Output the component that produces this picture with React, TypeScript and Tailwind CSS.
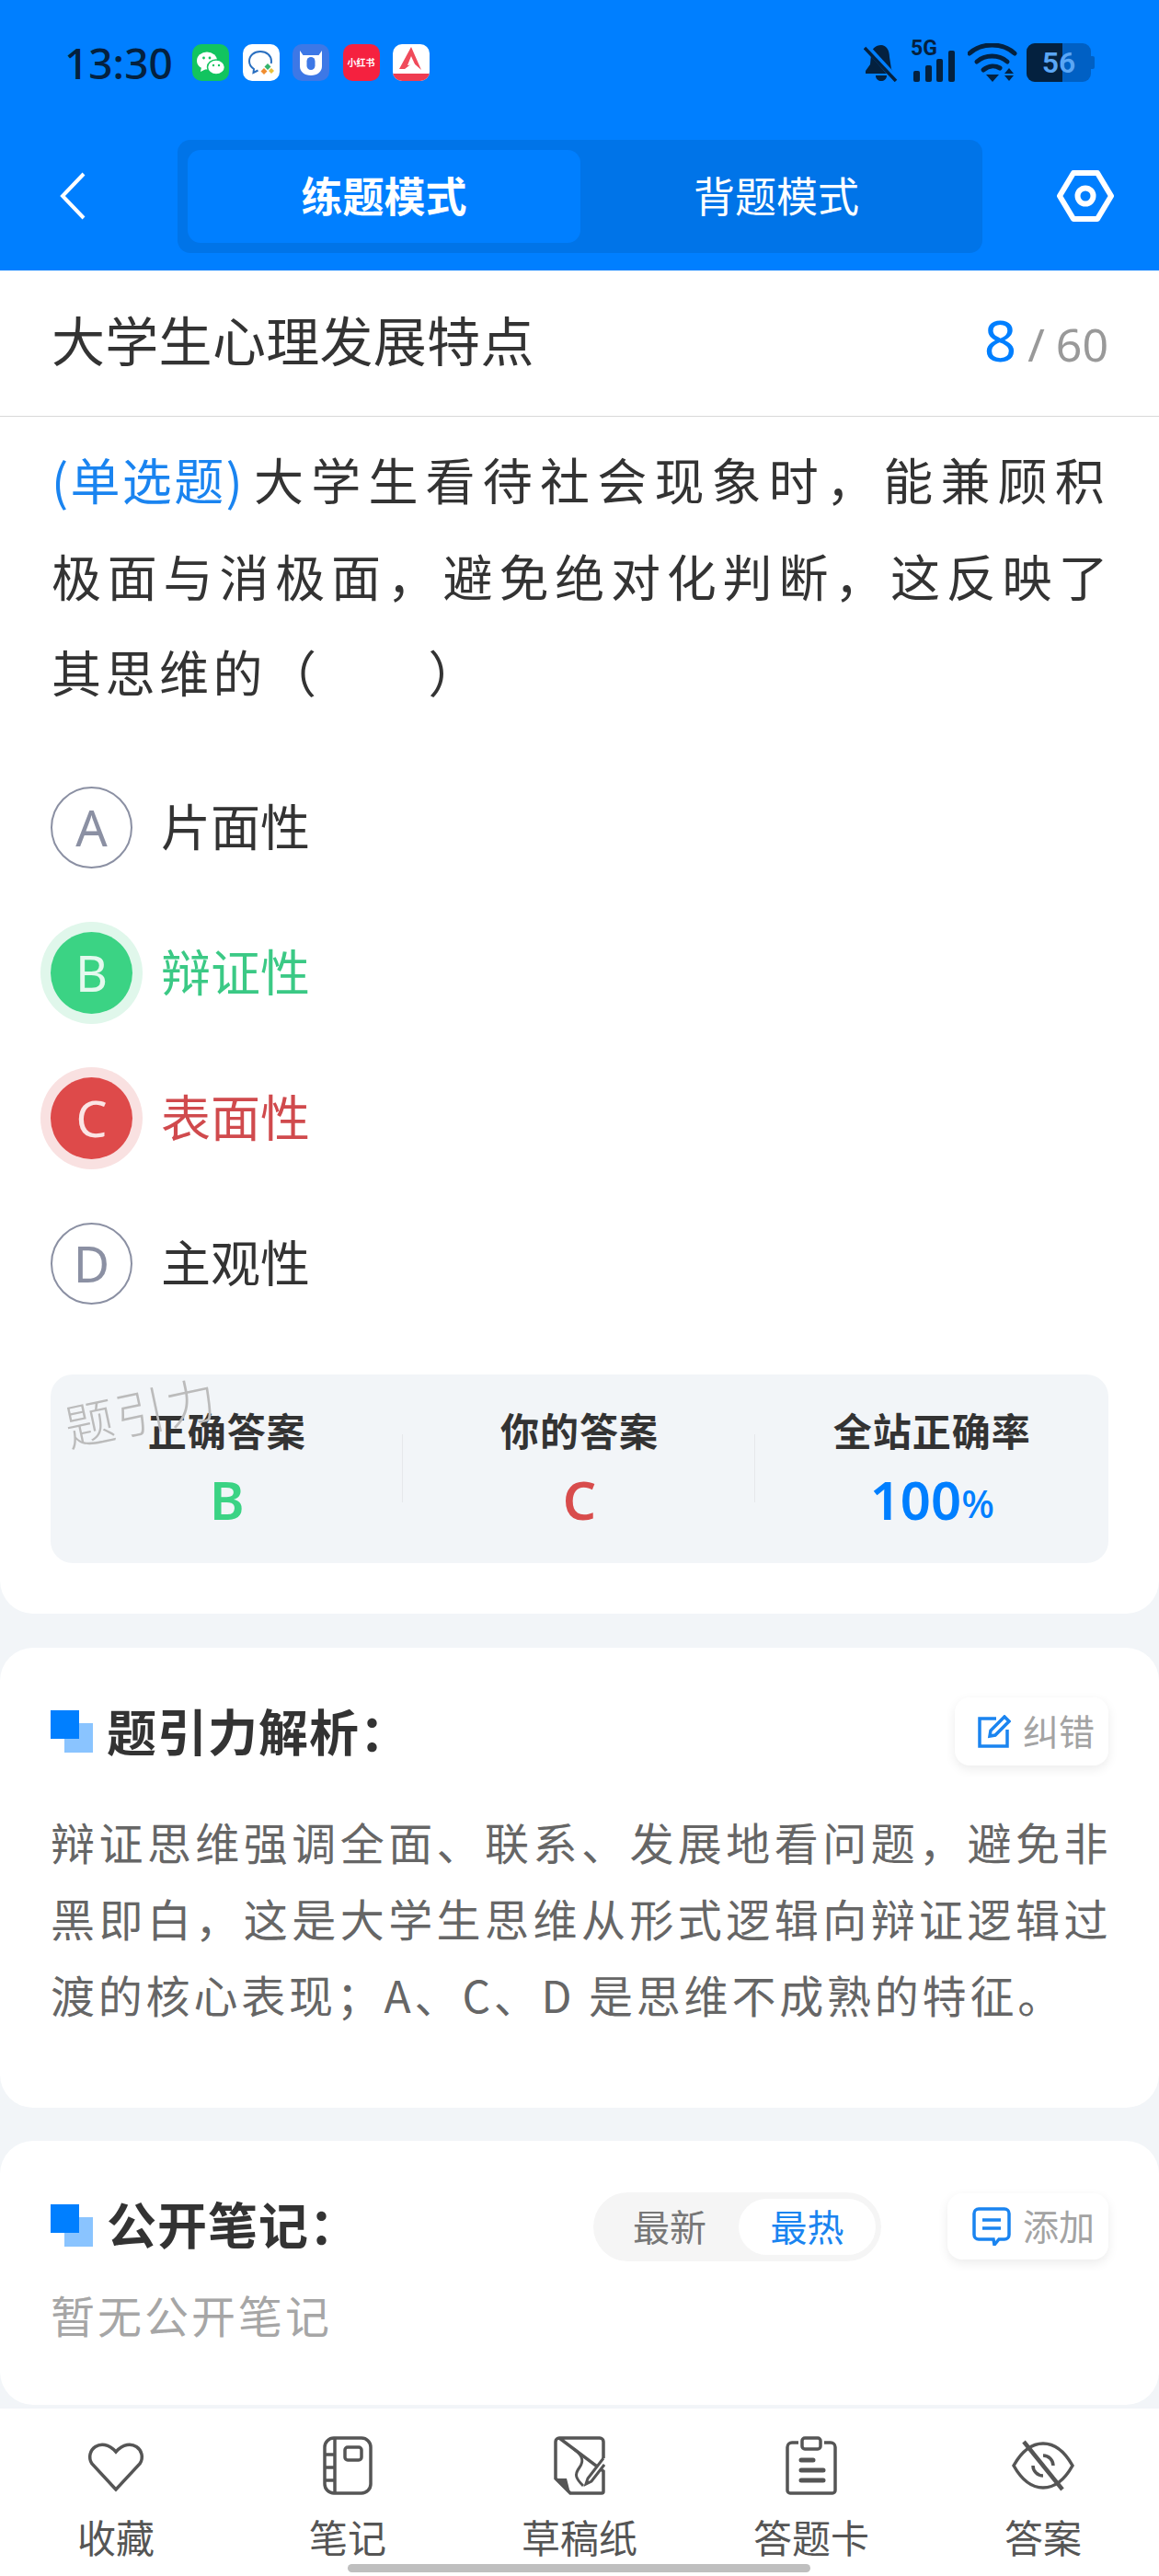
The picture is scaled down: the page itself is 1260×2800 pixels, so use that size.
import React from 'react';

const font = { fontFamily: '"Noto Sans CJK SC", sans-serif' };

const AppIcons = () => (
  <div className="flex items-center gap-[14.5px]">
    <div className="w-[40px] h-[40px] rounded-[10px] bg-[#12c45f] flex items-center justify-center">
      <svg viewBox="0 0 40 40" className="w-[40px] h-[40px]">
        <ellipse cx="16" cy="18" rx="11" ry="9.5" fill="#fff" />
        <path d="M10 25l-1 5 6-3z" fill="#fff" />
        <ellipse cx="26" cy="25" rx="9.5" ry="8" fill="#fff" stroke="#12c45f" strokeWidth="1.5" />
        <circle cx="12.5" cy="15" r="1.4" fill="#12c45f" />
        <circle cx="19" cy="15" r="1.4" fill="#12c45f" />
        <circle cx="23" cy="23" r="1.2" fill="#12c45f" />
        <circle cx="29" cy="23" r="1.2" fill="#12c45f" />
      </svg>
    </div>
    <div className="w-[40px] h-[40px] rounded-[10px] bg-white flex items-center justify-center">
      <svg viewBox="0 0 40 40" className="w-[40px] h-[40px]">
        <path d="M19 8c-7 0-12 4.500-12 10.500 0 3.500 2 6.500 5 8.500l-.5 4 5-2.500" fill="none" stroke="#2a6fc0" strokeWidth="2" />
        <path d="M19 8c7 0 12 4.500 12 10.500 0 1-.1 1.500-.3 2.500" fill="none" stroke="#2a6fc0" strokeWidth="2" />
        <path d="M27 21l3.500 3.500-3.500 3.500-3.500-3.500z" fill="#35b36b" />
        <path d="M23 26l3.500 3.500-3.500 3.500-3.500-3.500z" fill="#f08c2e" />
        <path d="M31 26l3 3-3 3-3-3z" fill="#e9c13a" />
      </svg>
    </div>
    <div className="w-[40px] h-[40px] rounded-[10px] bg-[#3d78e6] flex items-center justify-center">
      <svg viewBox="0 0 40 40" className="w-[40px] h-[40px]">
        <path d="M8 7l3.500 5h17L32 7v17c0 6-5 10-12 10S8 30 8 24z" fill="#fff" />
        <rect x="15.500" y="14" width="9" height="14" rx="4.500" fill="#3d78e6" />
      </svg>
    </div>
    <div className="w-[40px] h-[40px] rounded-[10px] bg-[#f5213f] flex items-center justify-center text-white font-bold text-[10px] leading-none whitespace-nowrap">
      小红书
    </div>
    <div className="w-[40px] h-[40px] rounded-[10px] bg-white overflow-hidden flex flex-col">
      <svg viewBox="0 0 40 32" className="w-[40px] h-[32px]">
        <path d="M20 3l11 25-9-8-9 7-6 0z" fill="#f04a5a" />
        <path d="M20 13l4 9-8 1z" fill="#fff" />
      </svg>
      <div className="h-[8px] bg-[#ef3c50]" />
    </div>
  </div>
);

const StatusIcons = () => (
  <div className="flex items-center">
    <svg viewBox="0 0 38 42" className="w-[38px] h-[42px] mr-[13px]">
      <path d="M19 2c-6 0-11 4-11 11l-1 10-5 7v3h31l-3-5-2-13c0-8-4-13-9-13z" fill="#04213f" />
      <path d="M13 35h12c0 4-3 6-6 6s-6-2-6-6z" fill="#04213f" />
      <path d="M3 4l33 36" stroke="#007fff" strokeWidth="7" />
      <path d="M1 5l34 36" stroke="#04213f" strokeWidth="3.500" />
    </svg>
    <div className="relative w-[50px] h-[42px] mr-[12px]">
      <span className="absolute left-0 top-[-8px] text-[23px] leading-[28px] font-bold text-[#04213f]" style={{ fontFamily: '"Roboto", sans-serif' }}>5G</span>
      <div className="absolute bottom-0 left-[3px] flex items-end gap-[5.5px]">
        <div className="w-[7px] h-[12px] rounded-[2px] bg-[#04213f]" />
        <div className="w-[7px] h-[18px] rounded-[2px] bg-[#04213f]" />
        <div className="w-[7px] h-[25px] rounded-[2px] bg-[#04213f]" />
        <div className="w-[7px] h-[34px] rounded-[2px] bg-[#04213f]" />
      </div>
    </div>
    <svg viewBox="0 0 54 42" className="w-[54px] h-[42px] mr-[10px]">
      <path d="M2 11C15-1 38-1 51 11" fill="none" stroke="#04213f" strokeWidth="5" strokeLinecap="round" />
      <path d="M10 20c9-8 24-8 33 0" fill="none" stroke="#04213f" strokeWidth="5" strokeLinecap="round" />
      <path d="M17 29c6-5 13-5 18-2" fill="none" stroke="#04213f" strokeWidth="5" strokeLinecap="round" />
      <path d="M20 34h14l-7 8z" fill="#04213f" />
      <path d="M45 27l5 6H40z" fill="#04213f" />
      <path d="M40 35h10l-5 6z" fill="#04213f" />
    </svg>
    <div className="relative flex items-center">
      <div className="relative w-[70px] h-[42px] rounded-[9px] bg-[#0060c4] overflow-hidden">
        <div className="absolute left-0 top-0 bottom-0 w-[39px] bg-[#04213f]" />
        <div className="absolute inset-0 flex items-center justify-center text-[32px] font-semibold text-[#5aa6f5] leading-none" style={{ fontFamily: '"Roboto", sans-serif' }}>56</div>
      </div>
      <div className="w-[4px] h-[14px] rounded-r-[2px] bg-[#0060c4]" />
    </div>
  </div>
);

const Option = ({ letter, text, state }: { letter: string; text: string; state?: 'right' | 'wrong' }) => {
  const circle =
    state === 'right'
      ? 'bg-[#3bd384] text-[#e4f9ee] shadow-[0_0_0_11px_#e0f7eb]'
      : state === 'wrong'
        ? 'bg-[#de4a4a] text-[#fbe5e5] shadow-[0_0_0_11px_#f9e1e1]'
        : 'border-[2px] border-[#8b90a3] text-[#8b90a3]';
  const label = state === 'right' ? 'text-[#3bc985]' : state === 'wrong' ? 'text-[#d04a4d]' : 'text-[#333333]';
  return (
    <div className="h-[158px] flex items-center">
      <div className={`w-[89px] h-[89px] rounded-full flex items-center justify-center text-[54px] leading-none ${circle}`} style={{ fontFamily: '"Noto Sans", sans-serif' }}>
        {letter}
      </div>
      <span className={`ml-[31px] mb-[5px] text-[54px] leading-none ${label}`}>{text}</span>
    </div>
  );
};

const Stat = ({ label, children }: { label: string; children: React.ReactNode }) => (
  <div className="flex flex-col items-center pt-[32px]">
    <span className="text-[42px] leading-[56px] font-bold tracking-[1px] text-[#333333]">{label}</span>
    <div className="mt-[14px] h-[68px] flex items-center" style={{ fontFamily: '"Noto Sans", sans-serif' }}>
      {children}
    </div>
  </div>
);

const SectionTitle = ({ text }: { text: string }) => (
  <div className="flex items-center">
    <div className="relative w-[46px] h-[46px]">
      <div className="absolute left-[15px] top-[14px] w-[31px] h-[32px] bg-[#8ac4ff]" />
      <div className="absolute left-0 top-0 w-[31px] h-[31px] bg-[#007fff]" />
    </div>
    <span className="ml-[15px] mb-[3px] text-[54px] leading-none font-bold tracking-[1px] text-[#333333]">{text}</span>
  </div>
);

const NavItem = ({ icon, label }: { icon: React.ReactNode; label: string }) => (
  <div className="flex flex-col items-center pt-[30px]">
    <div className="h-[64px] flex items-center justify-center">{icon}</div>
    <span className="mt-[23px] text-[42px] leading-[44px] text-[#555555]">{label}</span>
  </div>
);

const navStroke = { fill: 'none', stroke: '#555555', strokeWidth: 3.5 };

const App = () => {
  return (
    <div className="relative w-[1260px] h-[2800px] overflow-hidden bg-[#f2f5f8]" style={font}>
      <div className="h-[294px] bg-[#007fff]">
        <div className="h-[152px] px-[70px] pt-[47px] flex items-start justify-between">
          <div className="flex items-center h-[42px]">
            <span className="w-[139px] text-[46px] leading-none font-medium text-[#04213f]" style={{ fontFamily: '"Noto Sans", sans-serif' }}>13:30</span>
            <AppIcons />
          </div>
          <StatusIcons />
        </div>
        <div className="flex items-center pl-[64px] pr-[49px]">
          <svg viewBox="0 0 30 54" className="w-[30px] h-[54px] mb-[2px]">
            <path d="M27 3L4 27l23 24" fill="none" stroke="#fff" strokeWidth="4" />
          </svg>
          <div className="ml-[99px] w-[875px] h-[123px] rounded-[14px] bg-[#0074e8] flex items-center p-[11px]">
            <div className="w-[427px] h-[101px] rounded-[14px] bg-[#007fff] flex items-center justify-center pb-[3px] text-[45px] font-bold text-white">练题模式</div>
            <div className="flex-1 flex items-center justify-center pb-[3px] text-[45px] text-white">背题模式</div>
          </div>
          <svg viewBox="0 0 62 56" className="ml-auto w-[62px] h-[56px] mb-[1px]">
            <path d="M18 3h26l15 25-15 25H18L3 28z" fill="none" stroke="#fff" strokeWidth="6" strokeLinejoin="round" />
            <circle cx="31" cy="28" r="8.500" fill="none" stroke="#fff" strokeWidth="6" />
          </svg>
        </div>
      </div>

      <div className="bg-white rounded-b-[36px] h-[1460px]">
        <div className="h-[159px] px-[56px] flex items-center justify-between border-b border-[#d9d9d9]">
          <span className="mb-[10px] text-[58px] leading-none tracking-[0.3px] text-[#333333]">大学生心理发展特点</span>
          <div className="mb-[9px] mr-[-1px] flex items-baseline" style={{ fontFamily: '"Noto Sans", sans-serif' }}>
            <span className="text-[62px] leading-none text-[#007fff]">8</span>
            <span className="ml-[12px] text-[50px] leading-none text-[#999999]">/</span>
            <span className="ml-[12px] text-[50px] leading-none text-[#999999]">60</span>
          </div>
        </div>
        <div className="px-[56px] pt-[16px] text-[54px] leading-[104.500px] text-[#333333] h-[330px]">
          <div className="whitespace-nowrap tracking-[8.200px]"><span className="text-[#1a84f0] tracking-[2.300px] mr-[10px]">(单选题)</span>大学生看待社会现象时&#xFF0C;能兼顾积</div>
          <div className="whitespace-nowrap tracking-[6.800px]">极面与消极面&#xFF0C;避免绝对化判断&#xFF0C;这反映了</div>
          <div className="whitespace-nowrap tracking-[4.500px]">其思维的&#xFF08;<span className="inline-block w-[117px]" />&#xFF09;</div>
        </div>
        <div className="px-[55px] mt-[37px]">
          <Option letter="A" text="片面性" />
          <Option letter="B" text="辩证性" state="right" />
          <Option letter="C" text="表面性" state="wrong" />
          <Option letter="D" text="主观性" />
        </div>
        <div className="relative mx-[55px] mt-[42px] h-[205px] rounded-[24px] bg-[#f2f5f8] grid grid-cols-3">
          <span className="absolute left-[14px] top-[12px] -rotate-12 text-[54px] leading-none tracking-[2px] font-light text-[#bbbbbb]">题引力</span>
          <div className="absolute left-[382px] top-[65px] w-px h-[74px] bg-[#e6e8eb]" />
          <div className="absolute left-[765px] top-[65px] w-px h-[74px] bg-[#e6e8eb]" />
          <Stat label="正确答案"><span className="text-[57px] leading-none font-semibold text-[#3bd384]">B</span></Stat>
          <Stat label="你的答案"><span className="text-[57px] leading-none font-semibold text-[#d84c4c]">C</span></Stat>
          <Stat label="全站正确率">
            <span className="text-[58px] leading-none font-semibold text-[#007fff]">100</span>
            <span className="text-[42px] leading-none font-medium text-[#007fff] mt-[8px]">%</span>
          </Stat>
        </div>
      </div>

      <div className="mt-[37px] bg-white rounded-[36px] h-[500px] px-[55px] pt-[54px]">
        <div className="flex items-center justify-between h-[74px]">
          <SectionTitle text="题引力解析&#xFF1A;" />
          <div className="w-[167px] h-[74px] rounded-[16px] bg-white shadow-[0_4px_12px_rgba(0,0,0,0.08)] flex items-center pl-[25px]">
            <svg viewBox="0 0 36 36" className="w-[36px] h-[36px]">
              <path d="M20 4H2v30h30V16" fill="none" stroke="#1a84f0" strokeWidth="3.500" />
              <path d="M29 2l5 5-15 15-6 1 1-6z" fill="none" stroke="#1a84f0" strokeWidth="3.500" />
            </svg>
            <span className="ml-[13px] mb-[3px] text-[39px] leading-none text-[#a3a3a3]">纠错</span>
          </div>
        </div>
        <div className="mt-[41px] text-[48px] leading-[83px] text-[#666666]">
          <div className="whitespace-nowrap tracking-[4.450px]">辩证思维强调全面、联系、发展地看问题&#xFF0C;避免非</div>
          <div className="whitespace-nowrap tracking-[4.450px]">黑即白&#xFF0C;这是大学生思维从形式逻辑向辩证逻辑过</div>
          <div className="whitespace-nowrap tracking-[3.800px]">渡的核心表现&#xFF1B;A、C、D 是思维不成熟的特征。</div>
        </div>
      </div>

      <div className="mt-[36px] bg-white rounded-[36px] h-[287px] px-[55px] pt-[56px]">
        <div className="flex items-center h-[74px]">
          <div className="pb-[3px]">
            <SectionTitle text="公开笔记&#xFF1A;" />
          </div>
          <div className="ml-auto w-[313px] h-[75px] rounded-full bg-[#f5f5f5] flex items-center text-[40px] leading-none">
            <span className="w-[158px] text-center text-[#777777] pl-[8px] pb-[3px]">最新</span>
            <div className="w-[149px] h-[61px] rounded-full bg-white flex items-center justify-center pb-[3px] text-[#1a84f0]">最热</div>
          </div>
          <div className="ml-[72px] w-[175px] h-[72px] rounded-[16px] bg-white shadow-[0_4px_12px_rgba(0,0,0,0.08)] flex items-center pl-[27px]">
            <svg viewBox="0 0 42 42" className="w-[42px] h-[42px]">
              <path d="M7 2h28a5 5 0 015 5v23a5 5 0 01-5 5h-6l-5 6-1-6H7a5 5 0 01-5-5V7a5 5 0 015-5z" fill="none" stroke="#1a84f0" strokeWidth="3.500" />
              <path d="M11 14h20M11 23h20" stroke="#1a84f0" strokeWidth="3.500" />
            </svg>
            <span className="ml-[13px] mb-[3px] text-[39px] leading-none text-[#a3a3a3]">添加</span>
          </div>
        </div>
        <div className="mt-[28px] text-[48px] leading-[60px] tracking-[3px] text-[#a6a6a6]">暂无公开笔记</div>
      </div>

      <div className="mt-[4px] h-[183px] bg-white grid grid-cols-5">
        <NavItem
          label="收藏"
          icon={
            <svg viewBox="0 0 64 56" className="w-[64px] h-[56px] mt-[2px]">
              <path d="M32 53L6 25C-3 11 16-6 32 12 48-6 67 11 58 25z" {...navStroke} />
            </svg>
          }
        />
        <NavItem
          label="笔记"
          icon={
            <svg viewBox="0 0 54 64" className="w-[54px] h-[64px]">
              <rect x="2" y="2" width="50" height="60" rx="10" {...navStroke} />
              <path d="M13 2v60M2 20h11M2 34h11M2 48h11" {...navStroke} />
              <rect x="24" y="12" width="18" height="14" rx="3" {...navStroke} />
            </svg>
          }
        />
        <NavItem
          label="草稿纸"
          icon={
            <svg viewBox="0 0 56 64" className="w-[56px] h-[64px]">
              <path d="M6 2h44a4 4 0 014 4v18M54 38v22a2 2 0 01-2 2H18L2 46V6a4 4 0 014-4z" {...navStroke} />
              <path d="M2 46h12l4 16z" fill="#555555" />
              <path d="M22 14c8 6 12 12 6 20s-4 12 4 20" fill="none" stroke="#555555" strokeWidth="3" />
              <path d="M54 24L37 46l-2 6 6-3 14-18" fill="#fff" stroke="#555555" strokeWidth="3" />
            </svg>
          }
        />
        <NavItem
          label="答题卡"
          icon={
            <svg viewBox="0 0 56 64" className="w-[56px] h-[64px]">
              <path d="M14 7H7a5 5 0 00-5 5v47a3 3 0 003 3h46a3 3 0 003-3V12a5 5 0 00-5-5h-7" {...navStroke} />
              <rect x="18" y="2" width="20" height="12" rx="3" {...navStroke} />
              <path d="M17 26h13M17 37h24M17 48h24" fill="none" stroke="#555555" strokeWidth="5" strokeLinecap="round" />
            </svg>
          }
        />
        <NavItem
          label="答案"
          icon={
            <svg viewBox="0 0 70 56" className="w-[70px] h-[56px]">
              <path d="M3 28C12 12 23 4 35 4s23 8 32 24c-9 16-20 24-32 24S12 44 3 28z" {...navStroke} />
              <path d="M35 17a11 11 0 0111 11M24 28a11 11 0 0011 11" {...navStroke} />
              <path d="M14 2l42 52" stroke="#555555" strokeWidth="4.500" />
            </svg>
          }
        />
      </div>
      <div className="absolute left-[378px] top-[2787px] w-[503px] h-[9px] rounded-full bg-[#bfbfbf]" />
    </div>
  );
};

export default App;
